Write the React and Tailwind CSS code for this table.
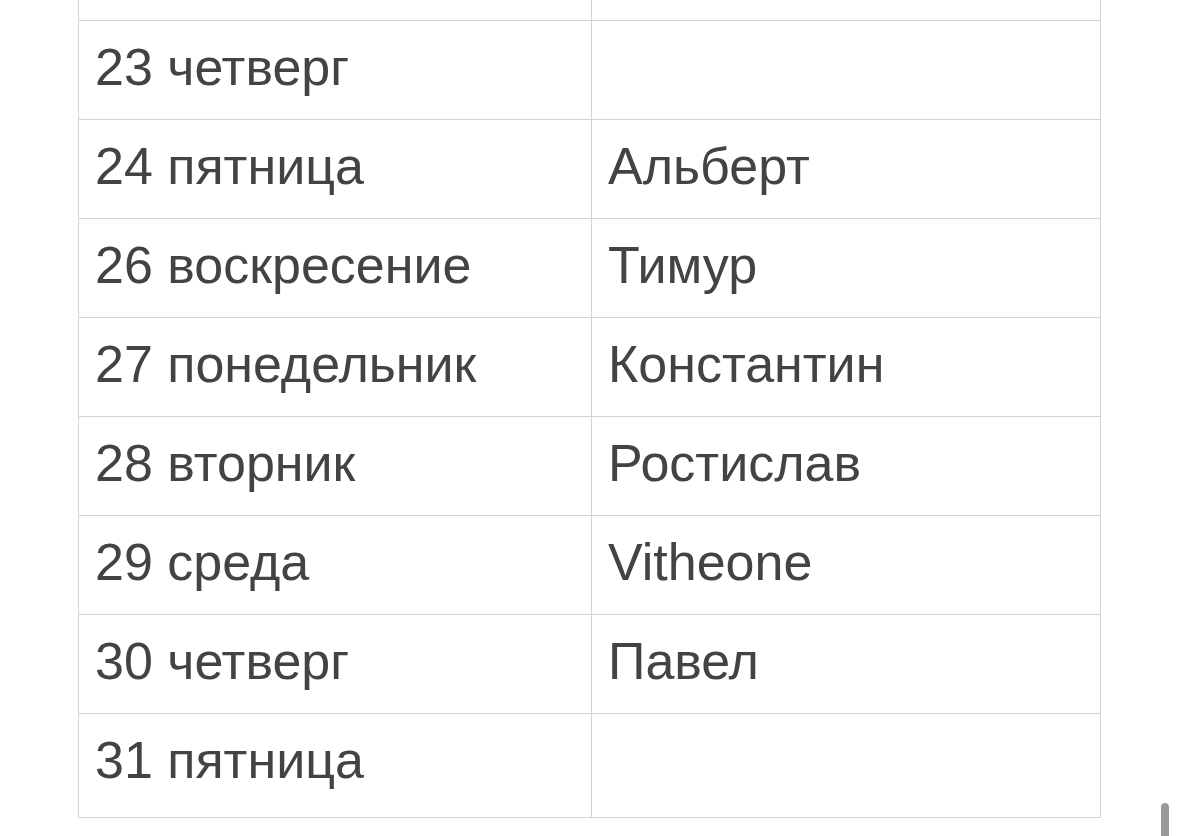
const rows = [
  ['', ''],
  ['23 четверг', ''],
  ['24 пятница', 'Альберт'],
  ['26 воскресение', 'Тимур'],
  ['27 понедельник', 'Константин'],
  ['28 вторник', 'Ростислав'],
  ['29 среда', 'Vitheone'],
  ['30 четверг', 'Павел'],
  ['31 пятница', ''],
]

export default function App() {
  return (
    <div
      className="relative h-[836px] w-[1179px] overflow-hidden bg-white text-[#434343]"
      style={{ fontFamily: '"Liberation Sans", Arial, sans-serif' }}
    >
      <table className="-mt-[79px] ml-[78px] w-[1023px] table-fixed border-collapse">
        <tbody>
          {rows.map(([day, name], i) => {
            const last = i === rows.length - 1
            const cell = `border border-[#d4d4d4] px-4 text-[52px] leading-none ${
              last ? 'pb-[12px]' : 'pb-[6px]'
            }`
            return (
              <tr key={i} className={last ? 'h-[104px]' : 'h-[99px]'}>
                <td className={`w-[513px] ${cell}`}>{day}</td>
                <td className={cell}>{name}</td>
              </tr>
            )
          })}
        </tbody>
      </table>
      <div className="absolute left-[1161px] top-[803px] h-[40px] w-[8px] rounded-t-full bg-[#9a9a9a]" />
    </div>
  )
}
